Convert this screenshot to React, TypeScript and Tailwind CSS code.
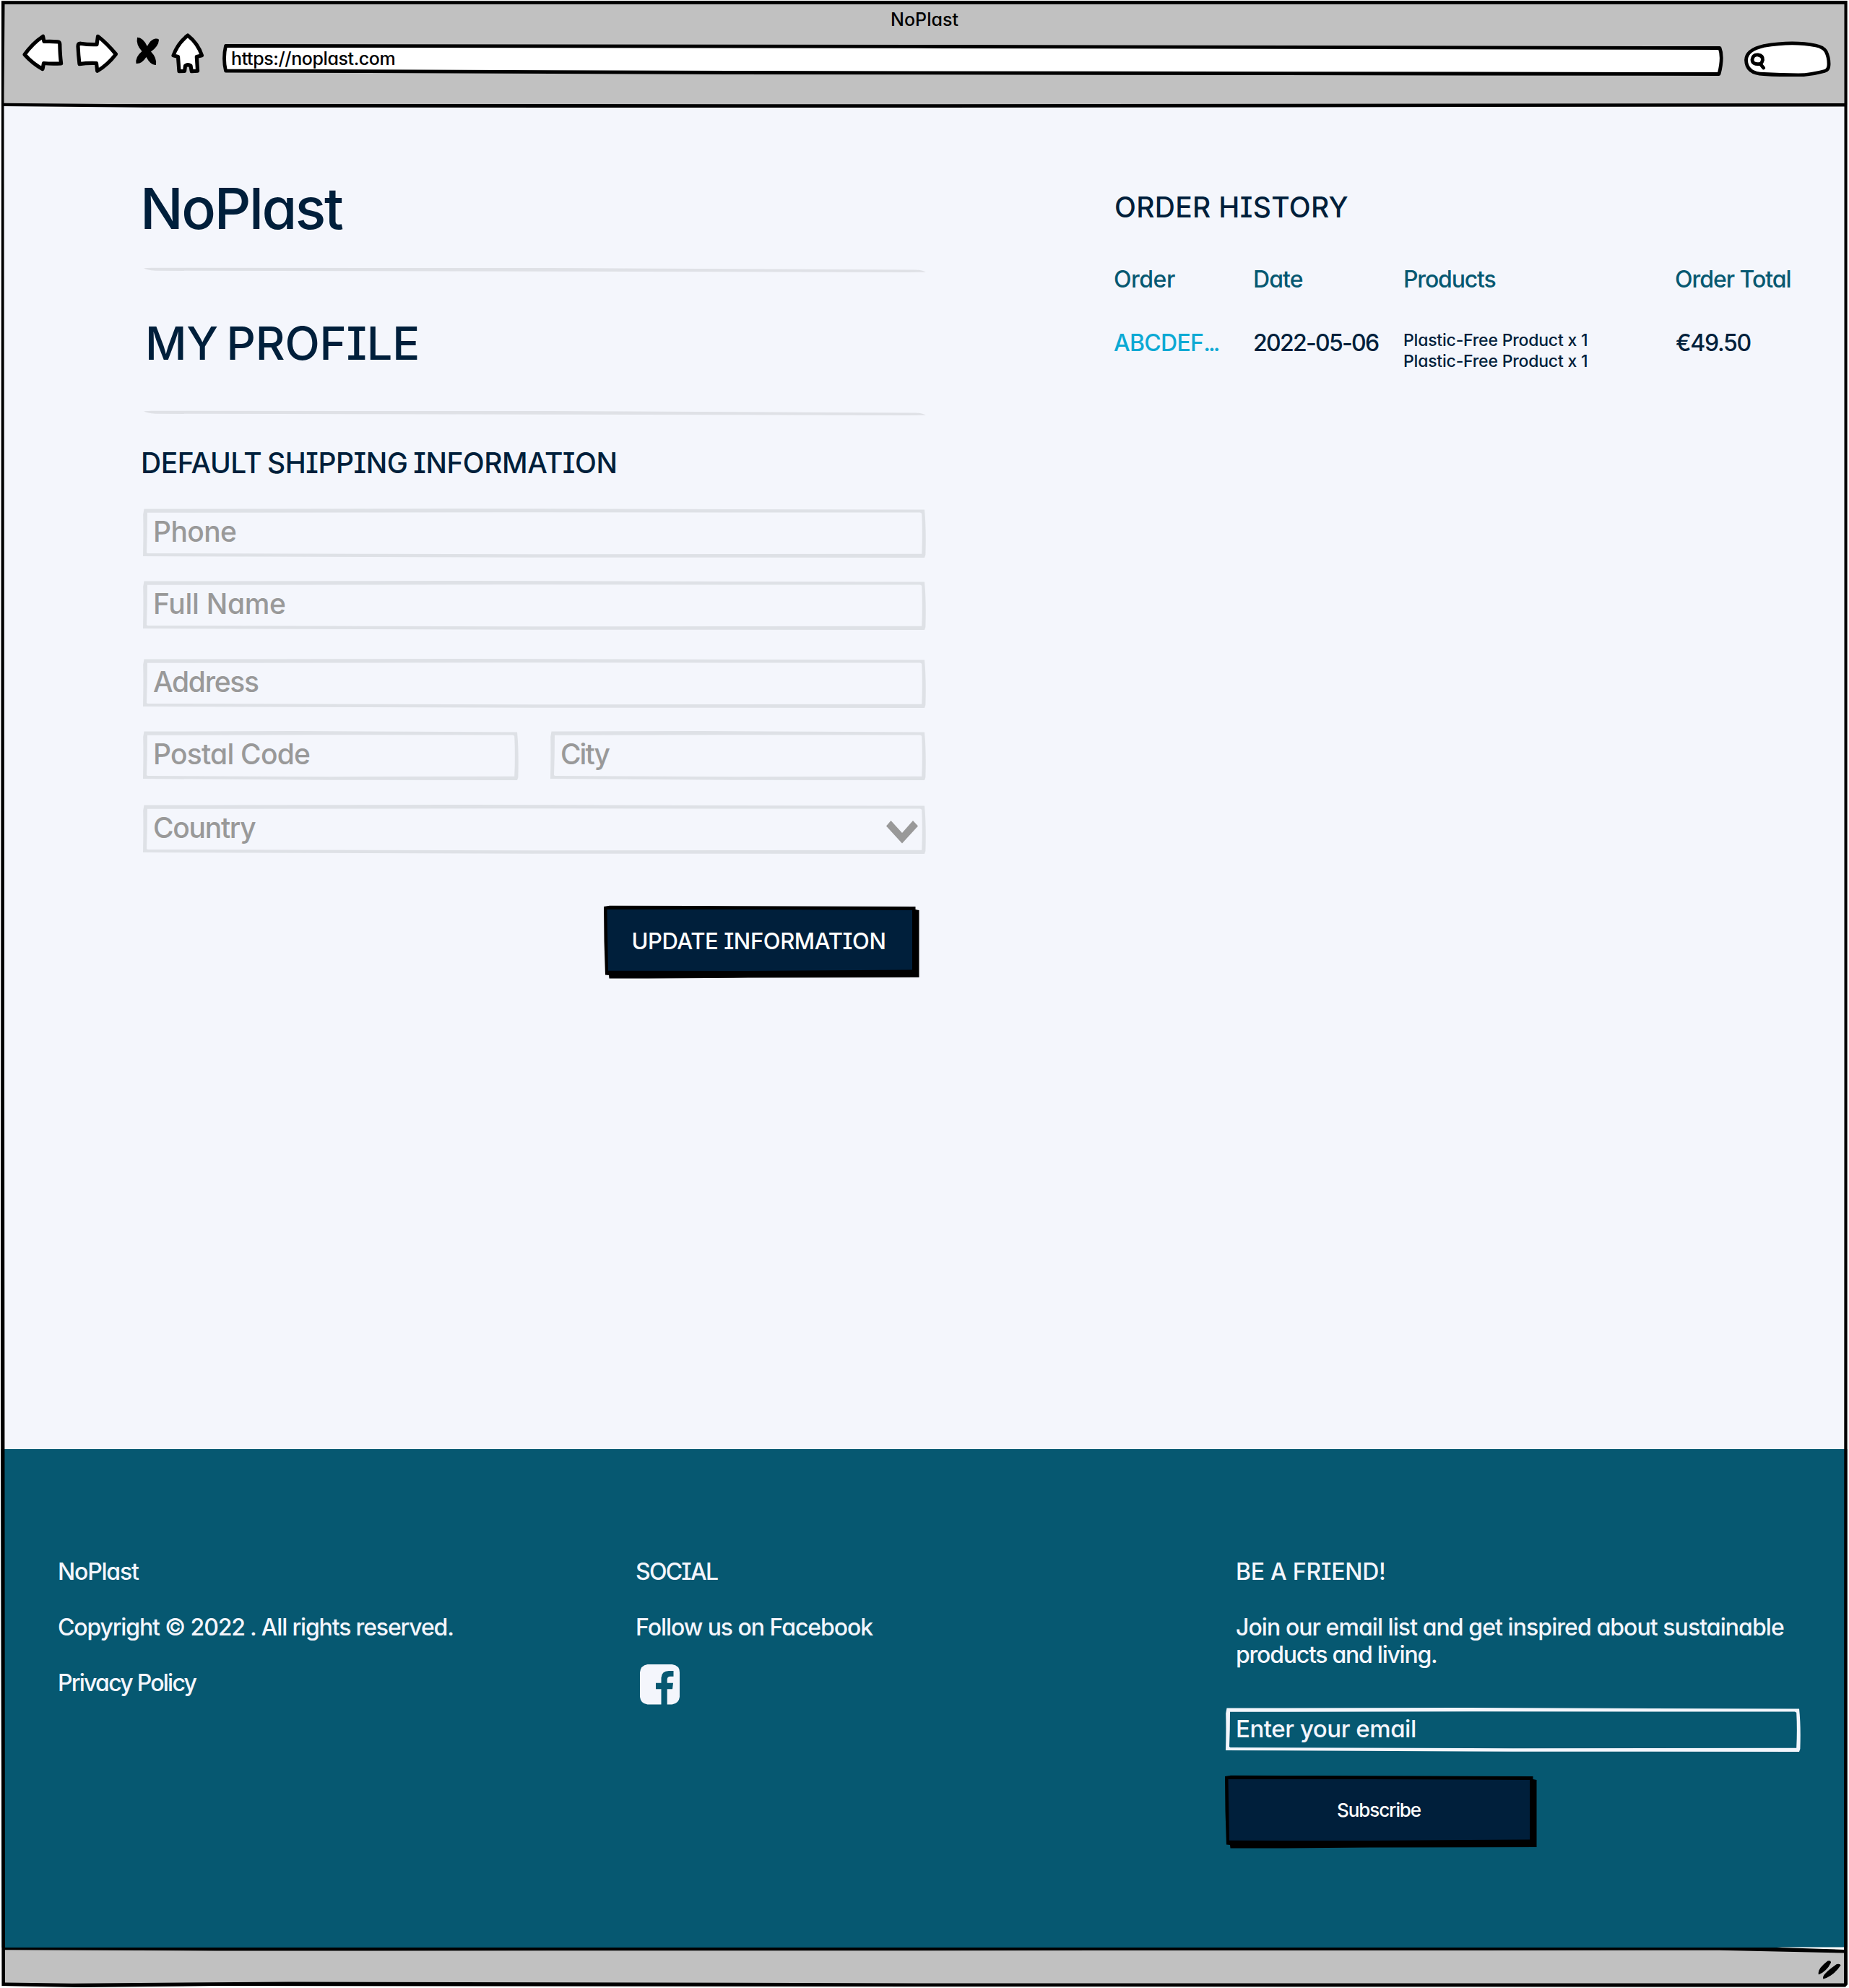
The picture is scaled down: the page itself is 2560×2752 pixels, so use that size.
import type { ReactNode } from 'react';

/* Hand-drawn rectangular outline stretched over its (relative) parent. */
function SketchFrame({ w, h, color }: { w: number; h: number; color: string }) {
  const outer = `M1.5 .6 L${w * 0.4} 0 L${w - 2} 1.6 Q${w + 0.5} ${h * 0.4} ${w - 0.6} ${h - 4} L${w - 2} ${h} L${w * 0.5} ${h - 0.3} L0 ${h - 2} Q.8 ${h * 0.5} .2 8 Z`;
  const inner = `M6 5.8 Q6 ${h * 0.5} 5 ${h - 7} L6.5 ${h - 6} L${w * 0.5} ${h - 4.8} L${w - 5.8} ${h - 5.2} Q${w - 4.5} ${h * 0.5} ${w - 5.8} 6.8 L${w - 8} 5.6 L${w * 0.45} 5.2 Z`;
  return (
    <svg className="pointer-events-none absolute inset-0 h-full w-full" viewBox={`0 0 ${w} ${h}`} fill={color} fillRule="evenodd" aria-hidden="true">
      <path d={outer + inner} />
    </svg>
  );
}

function Field({ w, children }: { w: number; children: ReactNode }) {
  return (
    <div className="relative flex h-[68px] w-full items-center justify-between pb-[6px] text-[39px] leading-none text-[#999999]">
      <SketchFrame w={w} h={68} color="#dee1e6" />
      {children}
    </div>
  );
}

function Rule() {
  return (
    <svg className="block h-[8px] w-[1084px]" viewBox="0 0 1084 8" fill="#dfe1e6" aria-hidden="true">
      <path d="M1 1.2 L12 .8 L560 1 L1070 3.4 Q1080 4.2 1084 6.8 L1060 6.9 L560 5.8 L17 4.8 Q6 4 1 1.2Z" />
    </svg>
  );
}

function SketchButton({ w, children }: { w: number; children: ReactNode }) {
  return (
    <button className="relative flex h-[102px] w-full items-center justify-center leading-none text-white">
      <svg className="absolute inset-0 h-full w-full" viewBox={`0 0 ${w} 102`} aria-hidden="true">
        <path d={`M0 2 L8 .8 L120 1 L${w - 5.5} 2 V6 L${w - 0.5} 7 V100 L200 100.6 L60 101.6 H7.5 L7 97 L2 96.5 L.5 50Z`} fill="#000000" />
        <path d={`M4.5 6 L200 6 L${w - 10} 7 V89.5 L200 91 L6 90.8Z`} fill="#001f3b" />
      </svg>
      {children}
    </button>
  );
}

function BrowserBar() {
  return (
    <header className="flex h-[145px] shrink-0 flex-col bg-[#c1c1c1]">
      <div className="flex h-[46px] shrink-0 items-center justify-center pt-[8px] text-[25px] leading-none text-black">NoPlast</div>
      <div className="flex h-[60px]">
        <svg className="ml-[28px] h-[60px] w-[66px]" viewBox="28 46 66 60" fill="#ffffff" stroke="#000000" strokeWidth="5.200" strokeLinejoin="round">
          <path d="M34 75.500 Q45 60 59.500 50.300 L61 57.500 Q71 57 80 57.800 Q82.500 58 82.800 61 Q83 76 84.600 87.800 Q72 88.700 60.500 87.500 L59 95.600 Q45 88 34 75.500Z" />
        </svg>
        <svg className="h-[60px] w-[80px]" viewBox="94 46 80 60" fill="#ffffff" stroke="#000000" strokeWidth="5.200" strokeLinejoin="round">
          <path d="M108 64 Q108 60.200 111.500 60.200 Q122 62 134 61.600 L135.500 50.300 Q148 60 160.500 75 Q149 90 134.700 98.200 L133.500 87.500 Q121 87 110 88.600 Q108.500 76 108 64Z" />
        </svg>
        <svg className="h-[60px] w-[56px]" viewBox="174 46 56 60" fill="#000000">
          <path d="M190 51.800 Q198 52 203.800 64 Q209 54.500 215 53.600 Q220 53 220 55.500 Q219.500 64 209 71.500 Q217.500 80 216 90 Q209 91 202.500 79 Q196 89 188.500 88 Q187 79 196.500 71 Q188 62 190 51.800Z" />
        </svg>
        <svg className="h-[60px] w-[72px]" viewBox="230 46 72 60" fill="#ffffff" stroke="#000000" strokeWidth="5.200" strokeLinejoin="round">
          <path d="M260 49 Q274 60 279.500 76.800 L272.300 78.500 L273.600 98.200 L265.300 98.700 L264 91 Q260 88.500 256.500 91 L255.600 98.300 L248 98.700 L246.500 78.500 L240 76.800 Q246 60 260 49Z" />
        </svg>
        <div className="relative ml-[6px] mt-[15px] h-[45px] w-[2078px]">
          <svg className="absolute inset-0 h-full w-full" viewBox="0 0 2078 45" fill="#ffffff" stroke="#000000" strokeWidth="4.800" strokeLinejoin="round" aria-hidden="true">
            <path d="M4.500 2.500 L1000 3.500 L2073 5.500 Q2078 18 2072 41.500 L700 39.500 L4.500 37 Q.5 20 4.500 2.500Z" />
          </svg>
          <span className="relative block pl-[12px] text-[25px] leading-[40px] tracking-[-0.4px] text-black">https://noplast.com</span>
        </div>
        <svg className="ml-[22px] h-[60px] w-[130px]" viewBox="2408 46 130 60" fill="#ffffff" stroke="#000000" strokeWidth="4.800" strokeLinecap="round" strokeLinejoin="round">
          <path d="M2417.500 83 Q2418 69 2442 63.500 Q2482 56.500 2514 63 Q2524 65 2528 71 Q2532.500 80 2532 90 Q2532 97 2526 98.500 Q2508 103.500 2490 104 Q2465 104 2442 102.500 Q2418 102 2417.500 83Z" />
          <path d="M2437 88.300 Q2426 90 2426 82.500 Q2427 75.500 2434 76 Q2441 77 2440.500 83 Q2439 88 2437 88.300 L2441.700 94" />
        </svg>
      </div>
    </header>
  );
}

function ProfileForm() {
  return (
    <section className="ml-[198px] w-[1084px] pt-[95px] text-[#001f3b]">
      <h1 className="-ml-[4px] text-[79px] leading-[96px] tracking-[-2.41px]">NoPlast</h1>
      <div className="mt-[34px]"><Rule /></div>
      <h2 className="ml-[3px] mt-[57px] text-[63px] leading-[80px] tracking-[-0.2px] [word-spacing:-5px]">MY PROFILE</h2>
      <div className="mt-[53px]"><Rule /></div>
      <h3 className="-ml-[3px] mt-[41px] text-[39px] leading-[48px] tracking-[-0.5px] [word-spacing:-2px]">DEFAULT SHIPPING INFORMATION</h3>
      <div className="mt-[39px]">
        <Field w={1084}><span className="pl-[14px] tracking-[-0.63px]">Phone</span></Field>
      </div>
      <div className="mt-[32px]">
        <Field w={1084}><span className="pl-[14px] tracking-[-0.3px]">Full Name</span></Field>
      </div>
      <div className="mt-[40px]">
        <Field w={1084}><span className="pl-[14px] tracking-[-1.3px]">Address</span></Field>
      </div>
      <div className="mt-[32px] grid grid-cols-2 gap-[44px]">
        <Field w={520}><span className="pl-[14px] tracking-[-0.78px]">Postal Code</span></Field>
        <Field w={520}><span className="pl-[14px] tracking-[-2px]">City</span></Field>
      </div>
      <div className="mt-[34px]">
        <Field w={1084}>
          <span className="pl-[14px] tracking-[-1.3px]">Country</span>
          <svg className="mr-[11px] mt-[13px] h-[32px] w-[44px]" viewBox="0 0 44 32" fill="#999999">
            <path d="M0 7.500 L6.500 0 L22 17 L37 0 L44 7.500 L22 31.500Z" />
          </svg>
        </Field>
      </div>
      <div className="ml-[638px] mt-[71px] w-[437px]">
        <SketchButton w={437}><span className="relative mb-[3px] mr-[8px] text-[31px] tracking-[-0.4px]">UPDATE INFORMATION</span></SketchButton>
      </div>
    </section>
  );
}

function OrderHistory() {
  return (
    <section className="ml-[260px] pt-[118px] text-[#001f3b]">
      <h2 className="ml-[1px] text-[39px] leading-[48px] tracking-[0.31px]">ORDER HISTORY</h2>
      <div className="mt-[56px] grid grid-cols-[193px_208px_376px_200px] text-[32px] leading-[40px] text-[#065871]">
        <span className="tracking-[-0.5px]">Order</span>
        <span className="tracking-[-0.9px]">Date</span>
        <span className="tracking-[-1.18px]">Products</span>
        <span className="tracking-[-1.04px]">Order Total</span>
      </div>
      <div className="mt-[48px] grid grid-cols-[193px_208px_376px_200px] text-[32px] leading-[40px]">
        <span className="text-[#0ba9d4]"><span className="tracking-[-0.7px]">ABCDEF</span><span className="tracking-[-3px]">...</span></span>
        <span className="tracking-[-1.72px]">2022-05-06</span>
        <span className="mt-[2px] text-[23px] leading-[29px] tracking-[-0.2px]">
          Plastic-Free Product x 1<br />Plastic-Free Product x 1
        </span>
        <span className="ml-[1px] tracking-[-1.3px]">€49.50</span>
      </div>
    </section>
  );
}

function Footer() {
  return (
    <footer className="flex h-[690px] shrink-0 bg-[#065871] pt-[150px] text-[32px] leading-[40px] text-[#f4f6fc]">
      <div className="w-[880px] pl-[80px]">
        <p className="tracking-[-1.2px]">NoPlast</p>
        <p className="mt-[37px] tracking-[-1.16px]">Copyright © 2022 . All rights reserved.</p>
        <p className="mt-[37px] tracking-[-1.76px]">Privacy Policy</p>
      </div>
      <div className="w-[817px]">
        <p className="tracking-[-1.77px]">SOCIAL</p>
        <p className="mt-[37px] tracking-[-1.05px]">Follow us on Facebook</p>
        <svg className="ml-[6px] mt-[31px] h-[56px] w-[55px]" viewBox="0 0 55 56" fill="#f4f6fc">
          <path d="M10.500 0 H44.500 Q55 1.500 55 11 V45 Q54 54 44.500 55.500 H37.700 V34.200 H45 L46 25.800 H37.700 V21 Q38 16.800 42 16.800 H46.500 V9 H40 Q30 9.300 29.500 18.500 V25.800 H22 V34.200 H29.500 V55.500 H10.500 Q1 54.500 0 45 V11 Q1 1.500 10.500 0Z" />
        </svg>
      </div>
      <div className="w-[796px]">
        <p className="ml-[14px] tracking-[-0.25px]">BE A FRIEND!</p>
        <p className="ml-[14px] mt-[38px] whitespace-nowrap leading-[38.400px] tracking-[-0.94px]">
          Join our email list and get inspired about sustainable<br />
          <span className="tracking-[-1.25px]">products and living.</span>
        </p>
        <div className="relative mt-[53px] h-[61px] w-[796px]">
          <SketchFrame w={796} h={61} color="#f4f6fc" />
          <span className="relative block pl-[14px] text-[33px] leading-[58px] tracking-[-0.45px]">Enter your email</span>
        </div>
        <div className="-ml-[1px] mt-[32px] w-[432px]">
          <SketchButton w={432}><span className="relative mb-[3px] mr-[6px] text-[26px] tracking-[-1.07px]">Subscribe</span></SketchButton>
        </div>
      </div>
    </footer>
  );
}

/* Ink lines of the window: outer edge, toolbar rule and status bar rule. */
function WindowOutline() {
  return (
    <svg className="pointer-events-none absolute inset-0 h-full w-full" viewBox="0 0 2560 2752" aria-hidden="true">
      <path d="M0 0H2560V2752H0Z M2 1.200L2557.600 1V2600L2558 2747L2555 2750.500L1300 2750L300 2749L110 2751L2.500 2749L1 1900Z" fill="#ffffff" fillRule="evenodd" />
      <path d="M2460 2695.500 H2554 V2702 Z" fill="#ffffff" />
      <path d="M2 1.200L2557.600 1V2600L2558 2747L2555 2750.500L1300 2750L300 2749L110 2751L2.500 2749L1 1900Z M6.500 6 L5.500 130 L6 1500 L7 2744.500 L100 2745.800 L400 2743.500 L1300 2745.500 L2553 2745.500 L2553.500 1500 L2553.500 6Z" fill="#000000" fillRule="evenodd" />
      <path d="M5 142.800 L150 144 L1300 144.200 L2554 142.900 V147.400 L1300 149 L200 148.800 L5 147Z" fill="#000000" />
      <path d="M6 2696 H2465 L2554 2699 V2703.500 L2380 2699.800 L300 2700.500 L6 2699.200Z" fill="#000000" />
      <path d="M2530.500 2714.500 Q2535.500 2713.500 2535 2717 Q2529 2729 2518 2733.500 Q2515.500 2726 2530.500 2714.500Z M2543 2719 Q2548 2718 2548.500 2720.500 Q2539 2735 2524.500 2739.500 Q2521 2734 2543 2719Z" fill="#000000" />
    </svg>
  );
}

export default function App() {
  return (
    <div className="relative flex h-[2752px] w-[2560px] flex-col overflow-hidden bg-[#f4f6fc] font-['Inter',sans-serif] font-medium [font-feature-settings:'cv11','cv08']">
      <BrowserBar />
      <main className="flex h-[1861px] shrink-0">
        <ProfileForm />
        <OrderHistory />
      </main>
      <Footer />
      <div className="grow bg-[#c1c1c1]" />
      <WindowOutline />
    </div>
  );
}
